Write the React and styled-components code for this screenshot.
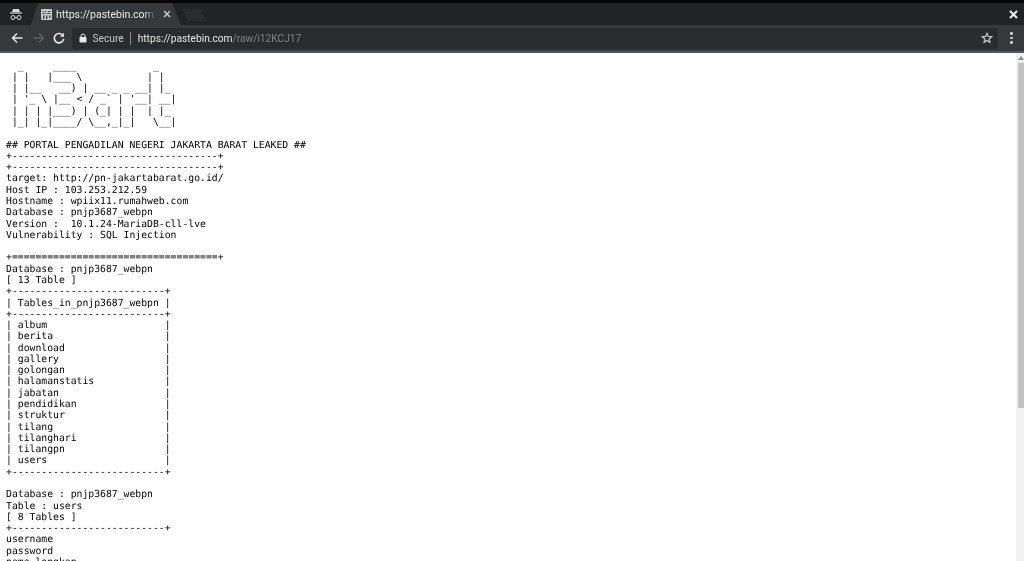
import React from "react";
import styled, { createGlobalStyle } from "styled-components";

const Global = createGlobalStyle`
  html, body { margin: 0; padding: 0; height: 100%; overflow: hidden; background: #fff; }
  #root { height: 100%; }
`;

const Window = styled.div`
  width: 1024px; height: 561px; display: flex; flex-direction: column; overflow: hidden;
  font-family: "Roboto", "Liberation Sans", sans-serif;
`;
const TabStrip = styled.div`
  height: 25px; flex: none; display: flex; align-items: flex-end;
  background: linear-gradient(#060606 0, #060606 3px, #222324 3px, #222324 100%);
`;
const Incognito = styled.div`
  width: 31px; height: 22px; flex: none; display: flex; align-items: center; justify-content: center;
  color: #d8d8d8;
`;
const Tab = styled.div`
  width: 150px; height: 22px; flex: none; background: #35393b; color: #e8e8e8; font-size: 10.5px;
  display: flex; align-items: center; padding: 0 14px 0 10px; box-sizing: border-box;
  clip-path: polygon(0 100%, 7px 0, calc(100% - 9px) 0, 100% 100%); overflow: hidden; white-space: nowrap;
  filter: blur(0.25px);
`;
const TabTitle = styled.span`
  margin-left: 4px; width: 100px; overflow: hidden; flex: none;
  -webkit-mask-image: linear-gradient(to right, #000 88%, transparent);
  mask-image: linear-gradient(to right, #000 88%, transparent);
`;
const TabClose = styled.div`display: flex; margin-left: 7px; color: #cfcfcf;`;
const NewTab = styled.div`
  width: 24px; height: 12px; margin: 0 0 4px 1px; background: #2a2c2e; flex: none;
  clip-path: polygon(0 0, 78% 0, 100% 100%, 22% 100%);
`;
const Spacer = styled.div`flex: 1;`;
const WinClose = styled.div`display: flex; margin: 0 6px 6px 0; color: #f0f0f0;`;
const Toolbar = styled.div`
  height: 28px; flex: none; background: #35393b; display: flex; align-items: center; box-sizing: border-box;
  border-bottom: 2px solid #55585a;
`;
const NavBtn = styled.div`
  width: 19px; margin-left: ${p => p.$ml || 0}px; display: flex; justify-content: center; color: ${p => p.$off ? "#5c6062" : "#e6e6e6"};
`;
const Omnibox = styled.div`
  margin-left: 4px; width: 926px; height: 21px; background: #292c2e; border-radius: 2px; display: flex; align-items: center;
  padding: 0 5px 0 7px; box-sizing: border-box; font-size: 10.2px; white-space: nowrap; color: #d8d8d8;
  filter: blur(0.2px);
`;
const Secure = styled.span`margin-left: 5.5px; color: #c8c8c8;`;
const Divider = styled.span`width: 1px; height: 13px; background: #8a8a8a; margin: 0 7px 0 6px;`;
const Host = styled.span`color: #e4e4e4;`;
const Path = styled.span`color: #7f8487;`;
const Star = styled.div`margin-left: auto; display: flex; color: #c4c4c4;`;
const Menu = styled.div`margin-left: 12px; display: flex; flex-direction: column; gap: 2px;`;
const Dot = styled.i`width: 2.5px; height: 2.5px; border-radius: 50%; background: #cfcfcf; display: block;`;
const Page = styled.div`flex: 1; min-height: 0; display: flex; background: #fff;`;
const Content = styled.pre`
  flex: 1; margin: 0; padding: 7.6px 0 0 6px; overflow: hidden;
  font-family: "DejaVu Sans Mono", monospace; font-size: 9.77px; line-height: 11.28px; color: #000;
  text-rendering: geometricPrecision; filter: blur(0.3px);
`;
const Scrollbar = styled.div`width: 8px; flex: none; background: #f1f1f1; box-sizing: border-box;`;
const ArrowUp = styled.div`
  height: 10px; display: flex; align-items: center; justify-content: center; padding-left: 2px; box-sizing: border-box; color: #8c8c8c;
`;
const Thumb = styled.div`height: 345px; margin-left: 2px; background: #c1c1c1;`;

const text = String.raw`  _     ____             _   
 | |   |___ \           | |  
 | |__   __) | __ _ _ __| |_ 
 | '_ \ |__ < / _${"`"} | '__| __|
 | | | |___) | (_| | |  | |_ 
 |_| |_|____/ \__,_|_|   \__|

## PORTAL PENGADILAN NEGERI JAKARTA BARAT LEAKED ##
+-----------------------------------+
+-----------------------------------+
target: http://pn-jakartabarat.go.id/
Host IP : 103.253.212.59
Hostname : wpiix11.rumahweb.com
Database : pnjp3687_webpn
Version :  10.1.24-MariaDB-cll-lve
Vulnerability : SQL Injection

+===================================+
Database : pnjp3687_webpn
[ 13 Table ]
+--------------------------+
| Tables_in_pnjp3687_webpn |
+--------------------------+
| album                    |
| berita                   |
| download                 |
| gallery                  |
| golongan                 |
| halamanstatis            |
| jabatan                  |
| pendidikan               |
| struktur                 |
| tilang                   |
| tilanghari               |
| tilangpn                 |
| users                    |
+--------------------------+

Database : pnjp3687_webpn
Table : users
[ 8 Tables ]
+--------------------------+
username
password
nama_lengkap`;

export default function App() {
  return (
    <Window>
      <Global />
      <TabStrip>
        <Incognito>
          <svg width="14" height="13" viewBox="0 0 14 13" fill="none" stroke="currentColor">
            <path d="M4 1h6l1 3H3z" fill="currentColor" stroke="none" />
            <path d="M1 5h12" strokeWidth="1.2" />
            <circle cx="4" cy="9.500" r="2" strokeWidth="1" />
            <circle cx="10" cy="9.500" r="2" strokeWidth="1" />
            <path d="M6 9.500h2" strokeWidth="1" />
          </svg>
        </Incognito>
        <Tab>
          <svg width="11" height="11" viewBox="0 0 11 11" style={{ flex: "none" }}>
            <rect width="11" height="11" rx="1" fill="#c6c9cb" />
            <path d="M1.500 2h1.500v1H1.500zM4 2h1.500v1H4zM7 2h2.500v1H7zM1.500 4h3v1h-3zM6 4h3.500v1H6zM2 6.500h1.500V10H2zM5 6.500h1.500V10H5zM8 6.500h1.500V9H8z" fill="#4a4e50" />
          </svg>
          <TabTitle>https://pastebin.com/raw</TabTitle>
          <TabClose>
            <svg width="8" height="8" viewBox="0 0 8 8" stroke="currentColor" strokeWidth="1.4"><path d="M1 1l6 6M7 1L1 7" /></svg>
          </TabClose>
        </Tab>
        <NewTab />
        <Spacer />
        <WinClose>
          <svg width="9" height="9" viewBox="0 0 9 9" stroke="currentColor" strokeWidth="2"><path d="M1 1l7 7M8 1L1 8" /></svg>
        </WinClose>
      </TabStrip>
      <Toolbar>
        <NavBtn $ml={7}>
          <svg width="12" height="12" viewBox="0 0 12 12" fill="none" stroke="currentColor" strokeWidth="1.500"><path d="M11.500 6H1.500M6 1.500L1.500 6 6 10.500" /></svg>
        </NavBtn>
        <NavBtn $ml={3} $off>
          <svg width="12" height="12" viewBox="0 0 12 12" fill="none" stroke="currentColor" strokeWidth="1.500"><path d="M.5 6h10M6 1.500L10.500 6 6 10.500" /></svg>
        </NavBtn>
        <NavBtn $ml={1}>
          <svg width="12" height="12" viewBox="0 0 12 12" fill="none" stroke="currentColor" strokeWidth="1.600"><path d="M10.200 4A4.700 4.700 0 1 0 10.700 6.800" /><path d="M11 .8v4H7z" fill="currentColor" stroke="none" /></svg>
        </NavBtn>
        <Omnibox>
          <svg width="8" height="10" viewBox="0 0 8 10" style={{ flex: "none" }}>
            <rect x="0.500" y="4" width="7" height="5.500" rx=".8" fill="#e8e8e8" />
            <path d="M2 4.500V3a2 2 0 0 1 4 0v1.500" fill="none" stroke="#e8e8e8" strokeWidth="1" />
          </svg>
          <Secure>Secure</Secure>
          <Divider />
          <Host>https://pastebin.com</Host>
          <Path>/raw/i12KCJ17</Path>
          <Star>
            <svg width="12" height="12" viewBox="0 0 24 24" fill="none" stroke="currentColor" strokeWidth="2.600"><path d="M12 3l2.800 6 6.500.7-4.900 4.400 1.400 6.400L12 17.200 6.200 20.500l1.400-6.400L2.700 9.700 9.200 9z" /></svg>
          </Star>
        </Omnibox>
        <Menu><Dot /><Dot /><Dot /></Menu>
      </Toolbar>
      <Page>
        <Content>{text}</Content>
        <Scrollbar>
          <ArrowUp>
            <svg width="6" height="4" viewBox="0 0 6 4" fill="currentColor"><path d="M3 0l3 4H0z" /></svg>
          </ArrowUp>
          <Thumb />
        </Scrollbar>
      </Page>
    </Window>
  );
}
